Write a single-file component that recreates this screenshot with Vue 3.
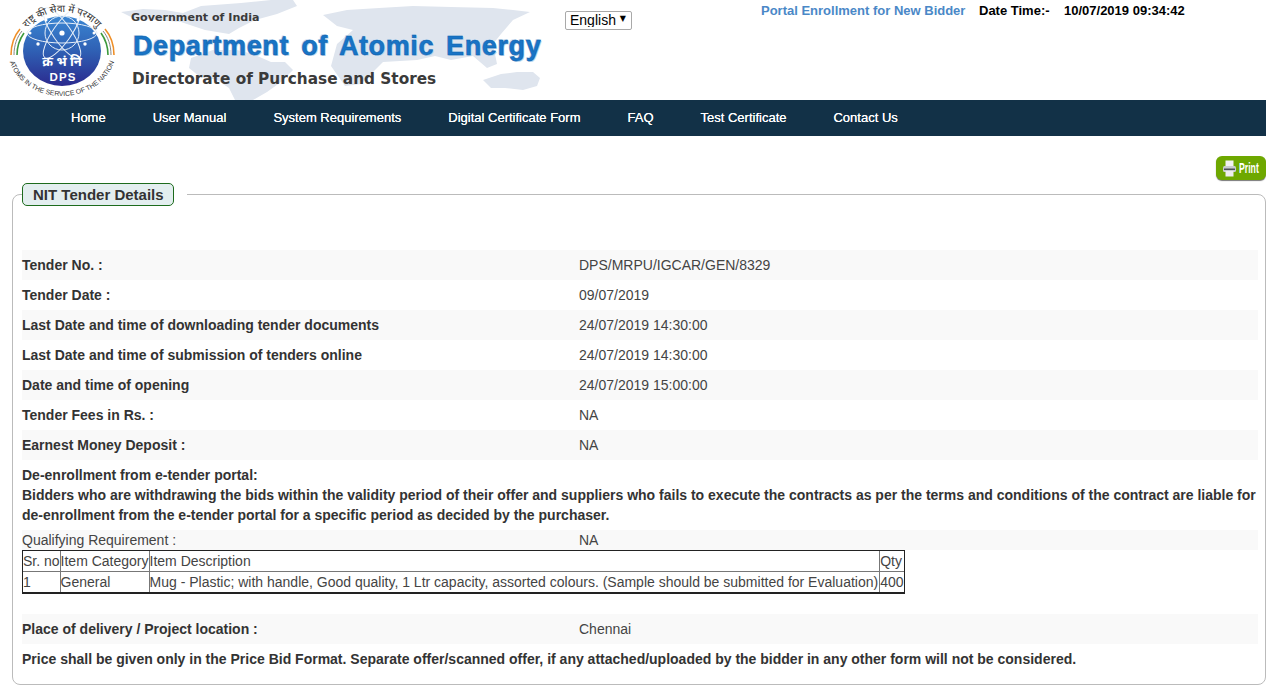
<template>
  <div class="page">
    <header class="banner">
      <svg class="map" width="440" height="100" viewBox="0 0 440 100">
        <path fill="#dfe5ee" d="M0 12 L22 9 L44 10 L62 13 L80 6 L120 3 L150 0 L172 0 L176 6 L156 14 L134 20 L118 28 L108 34 L84 30 L60 22 L34 20 L12 18 Z"/>
        <path fill="#dfe5ee" d="M70 58 L92 50 L116 50 L132 54 L150 62 L164 62 L172 70 L160 82 L146 92 L132 100 L114 100 L108 88 L96 80 L78 76 L68 68 Z"/>
        <path fill="#dfe5ee" d="M202 15 L226 10 L258 8 L292 6 L330 7 L372 8 L392 10 L409 12 L392 20 L380 34 L372 44 L376 64 L366 68 L352 56 L330 60 L314 56 L296 60 L262 62 L240 84 L224 86 L210 66 L216 44 L232 30 L216 26 Z"/>
        <path fill="#dfe5ee" d="M362 80 L380 74 L396 72 L412 72 L419 78 L416 86 L402 90 L384 88 L370 88 Z"/>
      </svg>

      <svg class="logo" width="120" height="100" viewBox="0 0 120 100">
        <defs>
          <linearGradient id="globe" x1="0" y1="0" x2="0" y2="1">
            <stop offset="0" stop-color="#3a86d2" />
            <stop offset="0.5" stop-color="#2f60b4" />
            <stop offset="1" stop-color="#2b2a8e" />
          </linearGradient>
          <path id="topArc" d="M18 52 A44 40 0 0 1 106 52" />
          <path id="lowArc" d="M8 50 A54 46 0 0 0 116 50" />
        </defs>
        <ellipse cx="62" cy="51" rx="39" ry="35" fill="url(#globe)" />
        <g fill="none" stroke="#e6eef8" stroke-width="1">
          <ellipse cx="62" cy="33" rx="35" ry="10" />
          <ellipse cx="62" cy="33" rx="30" ry="9" transform="rotate(55 62 33)" />
          <ellipse cx="62" cy="33" rx="30" ry="9" transform="rotate(125 62 33)" />
          <circle cx="62" cy="33" r="17" />
        </g>
        <g fill="#fff">
          <circle cx="62" cy="33" r="2.6" />
          <circle cx="38" cy="44" r="1.7" />
          <circle cx="85" cy="44" r="1.7" />
          <circle cx="46" cy="20" r="1.5" />
          <circle cx="78" cy="20" r="1.5" />
          <circle cx="30" cy="33" r="1.5" />
          <circle cx="94" cy="33" r="1.5" />
        </g>
        <text x="62" y="66" class="logo-hi" text-anchor="middle">क्र भं नि</text>
        <text x="63" y="81" class="logo-dps" text-anchor="middle">DPS</text>
        <g fill="none" stroke-width="1.6">
          <path stroke="#ef8f27" d="M11 55 C11 44 14 36 20 29" />
          <path stroke="#888" stroke-width="1" d="M14 55 C14 45 17 37 22 31" />
          <path stroke="#3c9a3c" d="M17 55 C17 47 19 40 24 33" />
          <path stroke="#ef8f27" d="M114 55 C114 44 111 36 105 29" />
          <path stroke="#888" stroke-width="1" d="M111 55 C111 45 108 37 103 31" />
          <path stroke="#3c9a3c" d="M108 55 C108 47 106 40 101 33" />
        </g>
        <text class="logo-arc-top" text-anchor="middle"><textPath href="#topArc" startOffset="50%">राष्ट्र की सेवा में परमाणु</textPath></text>
        <text class="logo-arc-low" text-anchor="middle"><textPath href="#lowArc" startOffset="50%">ATOMS IN THE SERVICE OF THE NATION</textPath></text>
      </svg>

      <div class="titles">
        <div class="gov">Government of India</div>
        <div class="dept">Department of Atomic Energy</div>
        <div class="dir">Directorate of Purchase and Stores</div>
      </div>

      <div class="lang">
        <select>
          <option>English</option>
        </select>
        <span class="lang-arrow">▼</span>
      </div>

      <div class="top-right">
        <a class="enroll">Portal Enrollment for New Bidder</a>
        <span class="dt-label">Date Time:-</span>
        <span>10/07/2019 09:34:42</span>
      </div>
    </header>

    <nav class="menu">
      <a v-for="item in menu" :key="item">{{ item }}</a>
    </nav>

    <div class="print-bar">
      <button class="print">
        <svg width="13" height="17" viewBox="0 0 13 17">
          <rect x="2.5" y="0.5" width="8" height="6" fill="#f2f2f2" />
          <rect x="0" y="6" width="13" height="6" rx="1.5" fill="#c9ccd0" />
          <rect x="1" y="8.5" width="11" height="1.5" fill="#4c5156" />
          <rect x="2.5" y="11" width="8" height="5.5" fill="#eeeeee" />
        </svg>
        <span class="print-label">Print</span>
      </button>
    </div>

    <fieldset class="details">
      <legend>NIT Tender Details</legend>

      <div class="rows">
        <div v-for="row in rows" :key="row.label" class="row">
          <b>{{ row.label }}</b>
          <span>{{ row.value }}</span>
        </div>
      </div>

      <p class="notice">
        De-enrollment from e-tender portal:<br>
        Bidders who are withdrawing the bids within the validity period of their offer and suppliers who fails to execute the contracts as per the terms and conditions of the contract are liable for de-enrollment from the e-tender portal for a specific period as decided by the purchaser.
      </p>

      <div class="row qualifying">
        <span>Qualifying Requirement :</span>
        <span>NA</span>
      </div>

      <table class="items">
        <tbody>
          <tr>
            <td>Sr. no</td>
            <td>Item Category</td>
            <td>Item Description</td>
            <td>Qty</td>
          </tr>
          <tr>
            <td>1</td>
            <td>General</td>
            <td>Mug - Plastic; with handle, Good quality, 1 Ltr capacity, assorted colours. (Sample should be submitted for Evaluation)</td>
            <td>400</td>
          </tr>
        </tbody>
      </table>

      <div class="row place">
        <b>Place of delivery / Project location :</b>
        <span>Chennai</span>
      </div>

      <p class="price">Price shall be given only in the Price Bid Format. Separate offer/scanned offer, if any attached/uploaded by the bidder in any other form will not be considered.</p>
    </fieldset>
  </div>
</template>

<script setup>
const menu = ['Home', 'User Manual', 'System Requirements', 'Digital Certificate Form', 'FAQ', 'Test Certificate', 'Contact Us']

const rows = [
  { label: 'Tender No. :', value: 'DPS/MRPU/IGCAR/GEN/8329' },
  { label: 'Tender Date :', value: '09/07/2019' },
  { label: 'Last Date and time of downloading tender documents', value: '24/07/2019 14:30:00' },
  { label: 'Last Date and time of submission of tenders online', value: '24/07/2019 14:30:00' },
  { label: 'Date and time of opening', value: '24/07/2019 15:00:00' },
  { label: 'Tender Fees in Rs. :', value: 'NA' },
  { label: 'Earnest Money Deposit :', value: 'NA' },
]
</script>

<style>
html, body {
  background: #fff;
  overflow: hidden;
}
</style>

<style scoped>
.page {
  width: 1266px;
  height: 686px;
  overflow: hidden;
  font-family: "Liberation Sans", Arial, sans-serif;
  font-size: 14px;
  color: #333;
}

.banner {
  position: relative;
  height: 100px;
  overflow: hidden;
  display: flex;
}
.map {
  position: absolute;
  left: 121px;
  top: 0;
}
.logo {
  position: relative;
  flex: none;
}
.logo-hi {
  font-family: "Noto Sans", sans-serif;
  font-size: 13px;
  font-weight: 700;
  fill: #fff;
}
.logo-dps {
  font-size: 11.5px;
  font-weight: 700;
  fill: #fff;
  letter-spacing: 1.2px;
}
.logo-arc-top {
  font-family: "Noto Sans", sans-serif;
  font-size: 10px;
  fill: #333;
}
.logo-arc-low {
  font-size: 6.8px;
  fill: #333;
}

.titles {
  position: relative;
  margin-left: 11px;
  width: 434px;
  flex: none;
}
.gov {
  margin-top: 10px;
  font-family: "DejaVu Sans", sans-serif;
  font-size: 11.1px;
  font-weight: 700;
  line-height: 16px;
  color: #3a3a3a;
}
.dept {
  margin: 3px 0 0 2px;
  font-size: 27px;
  font-weight: 700;
  line-height: 34px;
  letter-spacing: .6px;
  word-spacing: 4px;
  white-space: nowrap;
  color: #1874c6;
  -webkit-text-stroke: .5px #0d5ea8;
  text-shadow: 1px 1px 0 #b9d4ee, -1px -1px 0 #cfe2f5;
}
.dir {
  margin: 6px 0 0 1px;
  font-family: "DejaVu Sans", sans-serif;
  font-size: 15.3px;
  font-weight: 700;
  line-height: 20px;
  white-space: nowrap;
  color: #3a3a3a;
}

.lang {
  position: relative;
  margin-top: 11px;
  width: 67px;
  height: 19px;
  flex: none;
}
.lang select {
  appearance: none;
  display: block;
  width: 100%;
  height: 100%;
  box-sizing: border-box;
  padding: 0 0 2px 4px;
  border: 1px solid #a9a9a9;
  border-radius: 2px;
  background: #fff;
  color: #000;
  font-family: "Liberation Sans", Arial, sans-serif;
  font-size: 14px;
}
.lang-arrow {
  position: absolute;
  right: 6px;
  top: 2px;
  font-size: 8px;
  line-height: 12px;
  color: #000;
  font-family: "DejaVu Sans", sans-serif;
  pointer-events: none;
}

.top-right {
  position: relative;
  margin: 3px 0 0 129px;
  display: flex;
  height: 16px;
  line-height: 16px;
  white-space: nowrap;
  font-weight: 700;
  font-size: 13px;
  color: #000;
}
.enroll {
  width: 218px;
  color: #4a88c7;
}
.dt-label {
  width: 85px;
}

.menu {
  height: 36px;
  background: #123147;
  display: flex;
  align-items: center;
  gap: 47px;
  padding-left: 71px;
  padding-bottom: 1px;
  box-sizing: border-box;
  color: #fff;
  font-size: 13px;
  text-shadow: 0 0 .4px #fff;
}

.print-bar {
  display: flex;
  justify-content: flex-end;
  padding-top: 20px;
  height: 47px;
  box-sizing: border-box;
}
.print {
  width: 50px;
  height: 24px;
  padding: 0 0 0 7px;
  border: 0;
  border-radius: 6px;
  background: #6ea800;
  box-shadow: 0 1px 1px #777;
  display: flex;
  align-items: center;
  gap: 3px;
  color: #fff;
  font-family: "Liberation Sans", sans-serif;
  font-size: 14px;
  font-weight: 700;
  overflow: hidden;
}
.print svg,
.print-label {
  flex: none;
}
.print-label {
  transform: scaleX(.62);
  transform-origin: left center;
}

.details {
  box-sizing: border-box;
  width: 1254px;
  height: 502px;
  margin: 0 0 0 12px;
  padding: 0 7px 0 9px;
  border: 1px solid #bbb;
  border-radius: 8px;
  min-width: 0;
}
.details legend {
  position: relative;
  box-sizing: border-box;
  width: 152px;
  height: 23px;
  margin: 0;
  padding: 0 0 0 10px;
  border: 1px solid #1d6b1d;
  border-radius: 5px;
  background: #e3eeef;
  text-align: left;
  font-size: 15px;
  font-weight: 700;
  line-height: 22px;
  color: #333;
}
/* blank stretch of the frame line right after the legend */
.details legend::after {
  content: "";
  position: absolute;
  left: calc(100% + 1px);
  top: 0;
  width: 13px;
  height: 100%;
  background: #fff;
}

.rows {
  margin-top: 44px;
}
.row {
  display: grid;
  grid-template-columns: 557px 1fr;
  height: 30px;
  align-items: center;
}
.rows .row:nth-child(odd),
.place {
  background: #f9f9f9;
}
.row b {
  color: #333;
}
.row span {
  color: #444;
}

.notice {
  margin: 5px 0 0;
  font-weight: 700;
  line-height: 20px;
}

.qualifying {
  height: 20px;
  margin-top: 5px;
  background: #f9f9f9;
}

.items {
  border-collapse: separate;
  border-spacing: 0;
  border: 1px solid #222;
  border-bottom-width: 2px;
  line-height: 20px;
}
.items td {
  padding: 0;
  color: #444;
  white-space: nowrap;
}
.items td + td {
  border-left: 1px solid #777;
}
.items tr + tr td {
  border-top: 1px solid #777;
}
.items td:nth-child(3) {
  padding-right: 1px;
}

.place {
  margin-top: 20px;
}

.price {
  margin: 5px 0 0;
  font-weight: 700;
  line-height: 20px;
  white-space: nowrap;
}
</style>
